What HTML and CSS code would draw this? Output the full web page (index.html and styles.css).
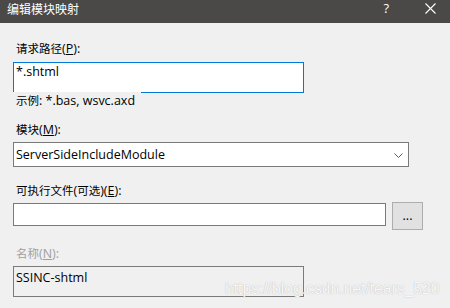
FILE: index.html
```html
<!DOCTYPE html>
<html lang="zh-CN">
<head>
<meta charset="utf-8">
<title>编辑模块映射</title>
<link rel="stylesheet" href="styles.css">
</head>
<body>
<div class="dialog">
  <div class="titlebar">
    <span class="title">编辑模块映射</span>
    <span class="help">?</span>
    <svg class="close" width="11" height="11" viewBox="0 0 11 11"><path d="M0.5 0.5L10.5 10.5M10.5 0.5L0.5 10.5" stroke="#ffffff" stroke-width="1.1" fill="none"/></svg>
  </div>
  <div class="content">
    <div class="label"><span class="cjk">请求路径</span>(<u>P</u>):</div>
    <div class="textbox focus">*.shtml</div>
    <div class="hint"><span class="cjk">示例</span>: *.bas, wsvc.axd</div>
    <div class="label gap-lg"><span class="cjk">模块</span>(<u>M</u>):</div>
    <div class="combo">
      <span>ServerSideIncludeModule</span>
      <svg class="chevron" width="9" height="5" viewBox="0 0 9 5"><path d="M0.5 0.5L4.5 4.5L8.5 0.5" stroke="#5a5a5a" stroke-width="1" fill="none"/></svg>
    </div>
    <div class="label gap-xl"><span class="cjk">可执行文件</span>(<span class="cjk">可选</span>)(<u>E</u>):</div>
    <div class="row">
      <div class="textbox path"></div>
      <div class="button">...</div>
    </div>
    <div class="label disabled gap-xl"><span class="cjk">名称</span>(<u>N</u>):</div>
    <div class="textbox readonly">SSINC-shtml</div>
  </div>
  <div class="watermark">https://blog.csdn.net/tears_520</div>
</div>
</body>
</html>
```
FILE: styles.css
```css
* { box-sizing: border-box; }
html, body { margin: 0; padding: 0; }
body {
  width: 450px;
  height: 308px;
  overflow: hidden;
  background: #f0f0f0;
  font-family: "Open Sans", "Noto Sans CJK SC", sans-serif;
  font-size: 12.5px;
  color: #000;
}
.dialog {
  position: relative;
  width: 450px;
  height: 308px;
}
.titlebar {
  height: 23px;
  background: #4a4947;
  color: #fff;
  display: flex;
  align-items: flex-start;
  padding: 0 0 0 7px;
}
.title {
  font-family: "Noto Sans CJK SC", sans-serif;
  font-size: 12px;
  line-height: 17px;
  flex: 1;
}
.help {
  font-family: "Open Sans", sans-serif;
  font-size: 13px;
  line-height: 17px;
  margin-right: 36px;
}
.close {
  margin-top: 3px;
  margin-right: 14px;
}
.content {
  display: flex;
  flex-direction: column;
  align-items: flex-start;
  padding: 17px 0 0 13px;
}
.cjk {
  font-family: "Noto Sans CJK SC", sans-serif;
  font-size: 11.5px;
}
.label {
  line-height: 16px;
  padding-left: 3px;
  white-space: nowrap;
}
.label u { text-decoration-thickness: 1px; text-underline-offset: 1px; }
.label.disabled { color: #a0a0a0; }
.gap-lg { margin-top: 12px; }
.gap-xl { margin-top: 15px; }
.textbox {
  background: #fff;
  border: 1px solid #7a7a7a;
  line-height: 16px;
  padding: 1px 2px 0;
  white-space: nowrap;
}
.textbox.focus {
  margin-top: 5px;
  width: 291px;
  height: 31px;
  border-color: #0078d7;
}
.hint {
  position: relative;
  margin-top: -1px;
  background: #f0f0f0;
  line-height: 16px;
  padding: 0 6px 0 3px;
  white-space: nowrap;
}
.combo {
  margin-top: 4px;
  width: 396px;
  height: 25px;
  background: #fff;
  border: 1px solid #7a7a7a;
  display: flex;
  align-items: center;
  justify-content: space-between;
  padding: 0 5px 0 2px;
  line-height: 16px;
}
.chevron { display: block; margin-top: 1px; }
.row {
  margin-top: 3px;
  display: flex;
  align-items: flex-start;
  gap: 6px;
}
.textbox.path {
  margin-top: 1px;
  width: 373px;
  height: 23px;
}
.button {
  width: 31px;
  height: 28px;
  background: #e1e1e1;
  border: 1px solid #adadad;
  display: flex;
  align-items: center;
  justify-content: center;
  line-height: 16px;
}
.textbox.readonly {
  margin-top: 4px;
  width: 291px;
  height: 31px;
  background: #f0f0f0;
  padding-top: 3px;
}
.watermark {
  position: absolute;
  left: 225px;
  top: 279px;
  font-family: "Liberation Sans", Arial, sans-serif;
  font-size: 15.7px;
  line-height: 20px;
  color: rgba(255, 255, 255, 0.92);
  text-shadow: 0 0 1px rgba(150, 150, 150, 0.8);
  white-space: nowrap;
}
```
